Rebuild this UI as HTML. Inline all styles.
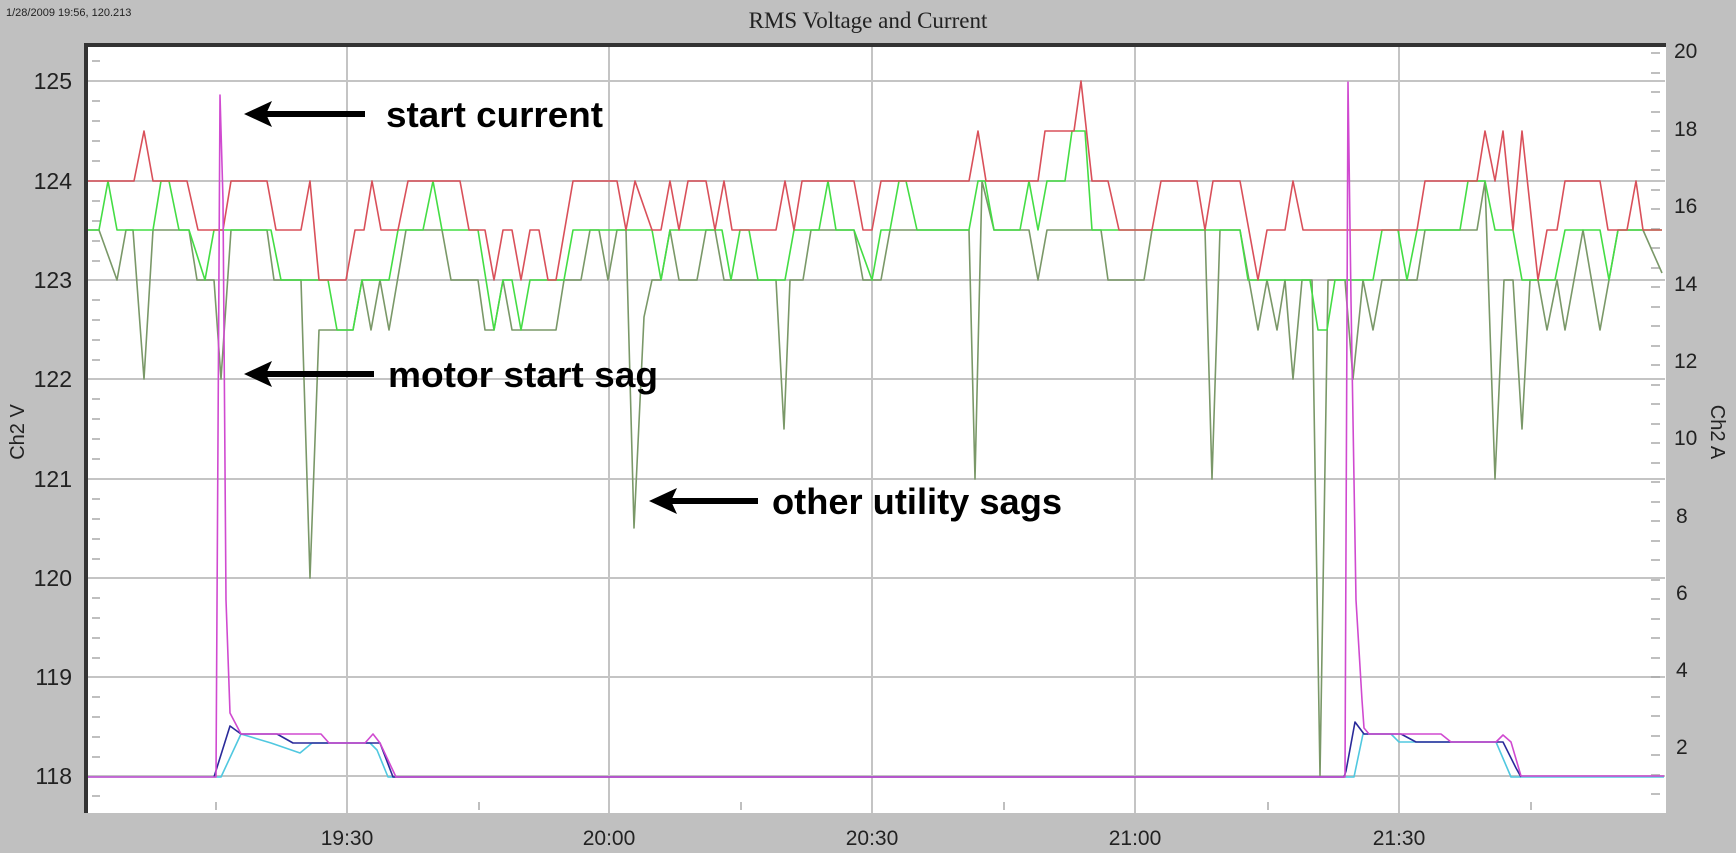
<!DOCTYPE html>
<html><head><meta charset="utf-8"><style>html,body{margin:0;padding:0;background:#c0c0c0;}svg{display:block}</style></head>
<body>
<svg width="1736" height="853" viewBox="0 0 1736 853" xmlns="http://www.w3.org/2000/svg">
<rect x="0" y="0" width="1736" height="853" fill="#c0c0c0"/>
<rect x="86" y="45" width="1580" height="768" fill="#fff"/>
<rect x="84" y="43" width="1582" height="4" fill="#333"/>
<rect x="84" y="43" width="4" height="770" fill="#333"/>
<text x="6" y="16" font-family="Liberation Sans, sans-serif" font-size="11" fill="#222">1/28/2009 19:56, 120.213</text>
<text x="868" y="28" text-anchor="middle" font-family="Liberation Serif, serif" font-size="23" fill="#222">RMS Voltage and Current</text>
<g stroke="#c4c4c4" stroke-width="2">
<line x1="88" y1="81" x2="1665" y2="81"/><line x1="88" y1="181" x2="1665" y2="181"/><line x1="88" y1="280" x2="1665" y2="280"/><line x1="88" y1="379" x2="1665" y2="379"/><line x1="88" y1="479" x2="1665" y2="479"/><line x1="88" y1="578" x2="1665" y2="578"/><line x1="88" y1="677" x2="1665" y2="677"/><line x1="88" y1="776" x2="1665" y2="776"/>
<line x1="347" y1="47" x2="347" y2="813"/><line x1="609" y1="47" x2="609" y2="813"/><line x1="872" y1="47" x2="872" y2="813"/><line x1="1135" y1="47" x2="1135" y2="813"/><line x1="1399" y1="47" x2="1399" y2="813"/>
</g>
<g stroke="#aaa" stroke-width="1.5">
<path d="M92 61h8M92 101h8M92 121h8M92 141h8M92 161h8M92 201h8M92 221h8M92 241h8M92 261h8M92 300h8M92 320h8M92 340h8M92 360h8M92 399h8M92 419h8M92 439h8M92 459h8M92 499h8M92 519h8M92 539h8M92 559h8M92 598h8M92 618h8M92 638h8M92 658h8M92 697h8M92 717h8M92 737h8M92 757h8M92 796h8"/>
<path d="M1651 53h9M1651 73h9M1651 92h9M1651 112h9M1651 131h9M1651 151h9M1651 170h9M1651 190h9M1651 209h9M1651 229h9M1651 248h9M1651 268h9M1651 287h9M1651 307h9M1651 326h9M1651 346h9M1651 365h9M1651 385h9M1651 404h9M1651 424h9M1651 443h9M1651 463h9M1651 482h9M1651 502h9M1651 521h9M1651 541h9M1651 560h9M1651 580h9M1651 599h9M1651 619h9M1651 638h9M1651 658h9M1651 677h9M1651 697h9M1651 716h9M1651 736h9M1651 755h9M1651 775h9M1651 794h9"/>
<path d="M216 802v8M479 802v8M741 802v8M1004 802v8M1268 802v8M1531 802v8"/>
</g>
<g font-family="Liberation Sans, sans-serif" font-size="23" fill="#222" text-anchor="end">
<text x="72" y="89">125</text><text x="72" y="189">124</text><text x="72" y="288">123</text><text x="72" y="387">122</text><text x="72" y="487">121</text><text x="72" y="586">120</text><text x="72" y="685">119</text><text x="72" y="784">118</text>
</g>
<g font-family="Liberation Sans, sans-serif" font-size="21" fill="#222">
<text x="1674" y="58">20</text><text x="1674" y="136">18</text><text x="1674" y="213">16</text><text x="1674" y="291">14</text><text x="1674" y="368">12</text><text x="1674" y="445">10</text><text x="1676" y="523">8</text><text x="1676" y="600">6</text><text x="1676" y="677">4</text><text x="1676" y="754">2</text>
</g>
<g font-family="Liberation Sans, sans-serif" font-size="21" fill="#222" text-anchor="middle">
<text x="347" y="845">19:30</text><text x="609" y="845">20:00</text><text x="872" y="845">20:30</text><text x="1135" y="845">21:00</text><text x="1399" y="845">21:30</text>
</g>
<text transform="translate(24,432) rotate(-90)" text-anchor="middle" font-family="Liberation Sans, sans-serif" font-size="20" fill="#222">Ch2 V</text>
<text transform="translate(1711,432) rotate(90)" text-anchor="middle" font-family="Liberation Sans, sans-serif" font-size="20" fill="#222">Ch2 A</text>
<g fill="none" stroke-width="1.6" stroke-linejoin="round">
<polyline stroke="#7a9868" points="88,230 99,230 117,280 126,230 133,230 144,379 153,230 189,230 197,280 214,280 221,379 231,230 267,230 274,280 301,280 310,578 319,330 353,330 362,280 371,330 380,280 389,330 406,230 442,230 451,280 478,280 485,330 494,330 503,280 512,330 556,330 564,280 581,280 590,230 599,230 608,280 617,230 626,230 634,528 644,317 652,280 661,280 670,230 679,280 697,280 706,230 715,230 724,280 749,280 776,280 784,429 790,280 803,280 811,230 854,230 863,280 881,280 890,230 969,230 975,479 982,181 994,230 1029,230 1038,280 1047,230 1101,230 1108,280 1144,280 1152,230 1205,230 1212,479 1220,230 1240,230 1258,330 1267,280 1277,330 1285,280 1293,379 1302,280 1312,280 1320,776 1328,280 1345,280 1353,379 1363,280 1373,330 1382,280 1417,280 1425,230 1477,230 1485,181 1495,479 1504,280 1513,280 1522,429 1530,280 1538,280 1547,330 1557,280 1565,330 1583,230 1600,330 1609,280 1618,230 1643,230 1662,273"/>
<polyline stroke="#44dd44" points="88,230 99,230 108,181 117,230 153,230 161,181 169,181 179,230 189,230 205,280 214,230 271,230 281,280 328,280 337,330 353,330 362,280 389,280 398,230 423,230 433,181 442,230 478,230 494,330 503,280 512,280 521,330 530,280 564,280 573,230 640,230 652,230 661,280 670,230 722,230 731,280 740,230 749,230 758,280 785,280 794,230 819,230 828,181 836,230 854,230 872,280 881,230 890,230 899,181 906,181 917,230 969,230 978,181 985,181 994,230 1020,230 1029,181 1038,230 1047,181 1065,181 1072,131 1085,131 1092,230 1240,230 1248,280 1310,280 1318,330 1327,330 1335,280 1373,280 1382,230 1398,230 1407,280 1417,230 1460,230 1468,181 1485,181 1495,230 1513,230 1522,280 1555,280 1565,230 1600,230 1609,280 1618,230 1662,230"/>
<polyline stroke="#d9505a" points="88,181 134,181 144,131 153,181 187,181 198,230 223,230 231,181 267,181 276,230 301,230 310,181 319,280 346,280 355,230 364,230 372,181 381,230 398,230 408,181 460,181 469,230 485,230 494,280 503,230 512,230 521,280 530,230 539,230 548,280 556,280 573,181 617,181 626,230 635,181 652,230 661,230 670,181 679,230 688,181 706,181 715,230 724,181 732,230 776,230 785,181 794,230 802,181 854,181 863,230 872,230 881,181 969,181 978,131 986,181 1038,181 1045,131 1074,131 1081,81 1092,181 1108,181 1119,230 1152,230 1161,181 1197,181 1205,230 1213,181 1240,181 1258,280 1267,230 1285,230 1293,181 1303,230 1417,230 1425,181 1477,181 1485,131 1495,181 1503,131 1513,230 1522,131 1538,280 1547,230 1557,230 1565,181 1600,181 1608,230 1627,230 1636,181 1643,230 1662,230"/>
<polyline stroke="#50c8e0" points="88,777 221,777 241,734 271,743 300,753 312,743 370,743 377,750 388,777 1354,777 1363,734 1391,734 1399,742 1496,742 1511,777 1664,777"/>
<polyline stroke="#2a2a9a" points="214,777 230,726 241,734 277,734 293,743 380,743 393,777 1344,777 1346,771 1355,722 1364,734 1401,734 1416,742 1503,742 1516,768 1521,777"/>
<polyline stroke="#d04ad0" points="88,777 216,777 220,95 223,200 226,600 230,713 241,734 321,734 329,743 365,743 373,734 380,743 396,777 1345,777 1348,82 1351,300 1356,600 1362,700 1364,728 1369,734 1441,734 1451,742 1496,742 1503,735 1511,742 1521,776 1664,776"/>
</g>
<g fill="#000">
<rect x="262" y="111" width="103" height="6"/><path d="M244 114 L272 101 L266 114 L272 127 Z"/>
<rect x="262" y="371" width="112" height="6"/><path d="M244 374 L272 361 L266 374 L272 387 Z"/>
<rect x="667" y="498" width="91" height="6"/><path d="M649 501 L677 488 L671 501 L677 514 Z"/>
</g>
<g font-family="Liberation Sans Narrow, Liberation Sans, sans-serif" font-weight="bold" font-size="36" fill="#000">
<text x="386" y="127" textLength="217" lengthAdjust="spacingAndGlyphs">start current</text>
<text x="388" y="387" textLength="270" lengthAdjust="spacingAndGlyphs">motor start sag</text>
<text x="772" y="514" textLength="290" lengthAdjust="spacingAndGlyphs">other utility sags</text>
</g>
</svg>
</body></html>
